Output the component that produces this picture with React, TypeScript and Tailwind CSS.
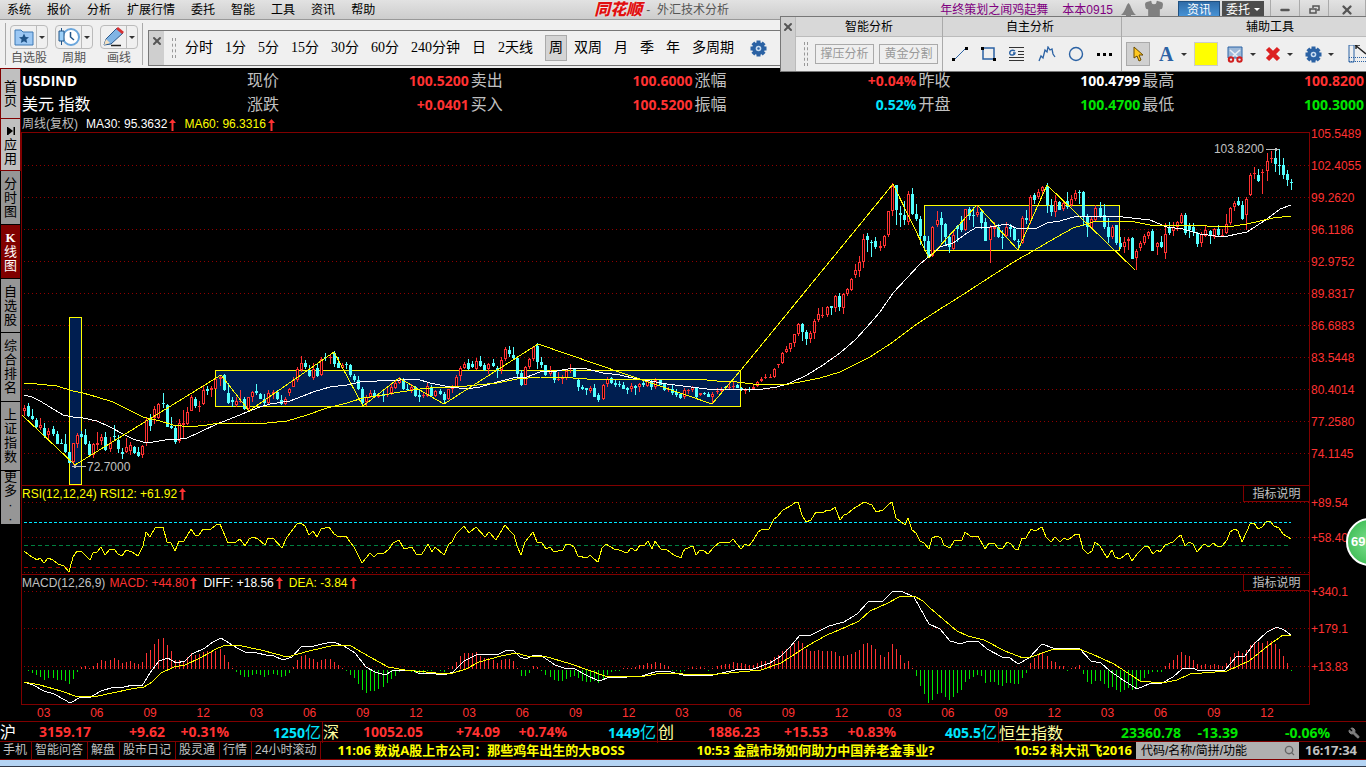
import React from "react";
import { Search, Wrench, Shirt, X, Minus } from "lucide-react";

const menus = ["系统", "报价", "分析", "扩展行情", "委托", "智能", "工具", "资讯", "帮助"];
const periods = ["分时", "1分", "5分", "15分", "30分", "60分", "240分钟", "日", "2天线"];
const longPeriods = ["双周", "月", "季", "年", "多周期"];

const sideTabs = [
  { chars: ["首", "页"], style: "h-[49px] bg-[#c0c0c0] text-black outline outline-1 outline-[#800000]" },
  { chars: ["⏯", "应", "用"], style: "h-[51px] bg-[#c0c0c0] text-black outline outline-1 outline-[#800000]" },
  { chars: ["分", "时", "图"], style: "h-[53px] bg-[#969696] text-black" },
  { chars: ["K", "线", "图"], style: "h-[53px] bg-[#800000] text-white" },
  { chars: ["自", "选", "股"], style: "h-[53px] bg-[#969696] text-black" },
  { chars: ["综", "合", "排", "名"], style: "h-[68px] bg-[#969696] text-black" },
  { chars: ["上", "证", "指", "数"], style: "h-[68px] bg-[#969696] text-black" },
  { chars: ["更", "多", "·", "·"], style: "h-[53px] bg-[#969696] text-black" },
];

const RED = "text-[#ff3232]";
const GREEN = "text-[#00e600]";
const CYAN = "text-[#00e6ff]";

const quotes = [
  [
    ["现价", "100.5200", RED],
    ["卖出", "100.6000", RED],
    ["涨幅", "+0.04%", RED],
    ["昨收", "100.4799", "text-white"],
    ["最高", "100.8200", RED],
  ],
  [
    ["涨跌", "+0.0401", RED],
    ["买入", "100.5200", RED],
    ["振幅", "0.52%", CYAN],
    ["开盘", "100.4700", GREEN],
    ["最低", "100.3000", GREEN],
  ],
];

const priceAxis = ["105.5489", "102.4055", "99.2620", "96.1186", "92.9752", "89.8317", "86.6883", "83.5448", "80.4014", "77.2580", "74.1145"];
const months = ["03", "06", "09", "12", "03", "06", "09", "12", "03", "06", "09", "12", "03", "06", "09", "12", "03", "06", "09", "12", "03", "06", "09", "12"];

// one candle per week: u/d, high, body top, body bottom, low
const candles = `u 405 408 411 416,d 403 406 416 417,d 409 416 419 420,d 418 420 427 429,u 418 425 428 430,d 423 428 436 438,u 428 431 435 439,d 426 429 434 436,d 431 434 444 444,d 439 443 444 444,
d 434 444 452 453,d 452 452 463 463,u 443 443 462 465,u 433 435 444 448,d 431 434 437 438,d 429 435 444 445,d 441 444 455 456,u 443 444 455 458,u 432 443 445 450,u 434 437 441 445,
d 432 437 450 451,u 437 443 449 452,d 425 436 437 441,d 435 440 449 453,d 448 452 454 459,u 438 447 452 453,u 442 445 451 455,d 446 447 453 454,d 447 452 456 457,u 445 446 455 458,
u 418 420 443 446,d 414 419 426 431,u 406 409 418 424,u 403 404 418 419,d 393 403 404 408,d 404 405 427 427,d 417 426 428 429,d 426 428 442 444,u 419 423 441 443,u 410 423 425 439,
u 407 412 424 425,u 395 397 411 411,d 397 399 406 408,u 401 406 407 412,u 385 390 404 405,d 386 389 391 395,u 386 388 390 397,u 378 379 389 389,u 375 377 379 386,d 374 375 390 391,
d 383 393 403 404,d 397 400 402 407,u 397 401 405 407,u 390 401 402 403,d 397 399 409 410,u 397 397 409 411,u 391 392 397 402,d 384 391 393 395,d 393 394 399 399,d 394 399 403 405,
u 390 393 403 404,u 390 392 394 399,d 390 392 399 400,d 395 400 404 405,u 397 399 404 405,u 388 389 393 396,u 377 380 387 387,u 367 369 380 382,u 356 363 370 372,d 360 363 367 369,
d 365 370 376 377,u 363 369 378 380,d 363 368 376 377,u 357 359 375 376,d 353 357 358 361,u 355 357 358 364,d 351 353 364 367,d 357 363 368 368,u 363 365 368 368,d 362 364 365 369,
d 364 365 375 377,d 374 376 380 382,d 376 380 389 390,d 387 389 403 406,u 395 397 402 406,u 390 393 397 398,d 390 393 397 398,u 393 395 397 398,d 389 394 396 402,u 387 394 395 397,
u 384 387 393 395,u 380 383 388 389,u 377 380 383 384,d 378 380 389 390,d 384 389 390 391,u 384 387 390 393,d 386 387 396 397,d 390 395 397 402,u 392 395 396 398,u 383 386 396 397,
d 385 387 396 397,u 390 391 396 397,d 389 391 394 395,d 392 394 400 403,u 389 389 399 400,u 385 387 389 393,u 375 377 387 388,u 366 368 376 381,u 362 364 368 369,d 359 363 369 370,
d 361 364 367 368,u 358 361 369 370,d 356 361 366 367,d 363 365 370 371,u 363 364 369 374,d 359 363 366 367,d 366 368 371 378,u 357 360 370 374,u 347 349 359 361,d 346 350 354 357,
d 347 355 358 359,d 357 358 374 379,d 370 373 385 386,u 366 367 385 385,u 358 359 367 369,u 346 347 359 361,d 343 346 362 369,d 357 362 365 368,d 365 365 375 376,u 366 371 374 376,
d 371 372 380 383,u 372 379 380 381,u 375 378 379 384,u 369 371 378 380,u 364 368 369 373,d 368 369 377 377,d 379 380 387 391,d 385 387 389 390,d 388 388 390 395,u 386 388 391 393,
d 384 388 397 397,d 393 395 400 402,u 384 385 399 400,u 377 379 384 387,d 377 378 383 384,d 380 383 385 387,d 381 384 385 387,d 382 385 389 389,d 387 388 390 394,u 383 386 389 392,
d 385 386 388 395,u 383 384 387 392,d 380 383 385 387,u 379 380 386 387,d 379 381 387 390,u 378 380 387 389,d 379 380 385 385,d 383 384 390 391,u 387 389 390 392,d 385 389 393 395,
d 389 392 395 397,d 393 394 398 399,u 388 390 397 399,u 389 390 391 394,u 386 387 390 392,d 387 387 397 398,u 393 393 395 396,d 392 393 394 395,d 392 394 397 397,u 392 394 397 403,
u 388 391 392 394,u 387 389 391 393,d 386 387 388 389,u 382 387 387 389,u 381 386 387 389,d 384 385 388 388,d 387 388 390 391,u 388 389 391 394,d 387 389 390 392,u 385 387 389 390,
u 381 382 386 387,u 377 379 381 382,u 374 377 378 379,u 374 377 378 378,u 368 369 377 378,u 364 364 365 368,u 352 353 363 364,u 346 349 352 353,u 343 343 349 352,u 334 334 343 347,
u 323 324 334 336,d 323 324 332 341,d 330 332 339 345,u 331 333 339 343,u 319 321 333 339,u 308 314 320 322,u 307 315 316 318,u 306 307 315 317,d 306 306 308 315,u 295 296 308 312,
d 293 296 307 311,u 293 294 308 314,u 288 289 294 296,u 278 279 290 291,u 264 270 275 278,u 256 262 271 277,u 234 239 262 268,d 233 236 240 252,d 240 242 243 257,d 237 241 247 249,
u 241 246 248 251,u 235 236 246 248,u 211 211 235 237,u 183 186 211 216,d 185 185 210 225,d 206 213 215 227,d 201 215 220 225,u 191 194 222 225,d 188 194 214 215,d 204 214 219 221,
d 216 219 236 245,d 235 236 241 250,d 236 241 257 258,u 226 227 256 257,u 211 220 225 227,d 212 218 225 242,d 223 224 237 246,d 234 237 247 253,u 232 235 249 250,d 225 226 229 242,
d 216 222 230 232,u 209 209 230 231,d 207 209 216 220,d 207 215 216 227,u 205 212 215 217,d 210 212 223 229,d 218 222 241 241,u 225 227 240 263,u 222 227 229 237,d 224 227 237 238,
d 230 237 238 249,u 222 227 236 237,d 224 227 229 237,d 228 229 240 241,d 239 241 242 250,u 216 218 243 244,d 210 218 220 224,u 195 197 221 224,d 193 195 200 204,u 189 192 197 199,
u 186 187 191 194,d 183 187 205 213,d 199 205 212 216,u 195 201 212 217,d 201 202 210 210,u 200 203 209 211,d 192 201 207 209,u 195 199 205 207,u 190 193 199 201,d 190 192 193 204,
d 191 192 217 226,d 214 217 227 237,u 216 219 228 229,u 205 208 220 221,d 202 208 216 218,d 204 215 227 229,d 218 227 237 243,u 225 227 237 239,d 225 225 243 245,d 237 243 247 249,
u 237 242 247 253,u 237 239 241 250,d 237 238 259 259,u 249 251 258 270,u 241 243 248 251,u 234 236 243 245,u 231 232 236 239,d 229 231 251 251,u 242 243 247 255,d 236 242 247 248,
u 223 234 253 259,d 222 227 233 235,u 222 227 231 236,u 221 222 227 231,u 213 215 223 224,d 213 215 233 235,d 223 226 230 238,d 223 227 232 236,d 232 233 244 247,u 232 234 243 247,
u 226 230 236 237,d 230 231 236 244,u 228 229 237 239,d 225 229 235 237,u 229 235 236 237,u 214 224 233 234,u 207 208 223 225,u 201 203 207 211,d 197 201 205 206,d 201 205 219 220,
u 197 199 215 230,u 173 175 195 196,u 167 173 174 179,d 169 175 181 182,u 169 172 173 194,u 153 161 171 181,u 151 158 159 163,d 151 158 164 172,d 149 165 166 175,d 158 165 175 179,
d 170 174 180 186,d 179 182 183 190`
  .split(",")
  .map((row) => {
    const [kind, ...ys] = row.trim().split(" ");
    return { up: kind === "u", ys: ys.map(Number) };
  });

const ma30 =
  "24,395 32,397 40,401 50,407 63,415 73,417 83,418 97,421 110,427 123,434 133,439 143,442 153,442 165,440 180,439 187,438 200,432 217,424 230,419 247,412 260,407 270,404 290,401 303,396 313,392 330,387 347,385 360,382 377,381 400,380 417,379 430,383 450,387 467,389 480,387 497,382 513,378 527,377 540,372 557,371 573,368 587,369 603,373 620,375 637,379 650,381 667,384 683,386 707,389 730,389 763,389 777,387 790,383 807,375 823,365 840,353 855,340 867,327 880,312 893,293 907,278 920,264 933,253 940,247 953,243 967,233 977,227 990,227 1007,224 1018,229 1037,228 1047,223 1060,221 1077,216 1100,216 1123,217 1150,220 1167,227 1183,229 1200,234 1223,237 1247,232 1267,219 1280,209 1291,205";
const ma60 =
  "24,383 37,384 57,386 73,391 83,393 97,397 113,402 127,409 143,417 160,421 173,425 190,427 207,425 220,423 247,424 267,423 287,421 307,415 327,408 347,403 363,398 383,395 400,392 420,389 440,387 450,387 467,386 497,383 517,379 540,377 573,378 600,380 617,379 663,379 697,379 717,381 737,382 753,384 783,385 800,382 820,378 840,372 870,357 893,342 917,324 940,309 953,301 967,292 990,277 1017,260 1033,251 1050,241 1073,228 1093,222 1110,221 1130,221 1150,225 1187,225 1227,227 1247,224 1273,218 1291,216";
const zigzag =
  "22,415 75,465 221,375 249,411 334,352 363,406 399,378 444,404 538,344 712,404 741,370 893,184 929,258 977,205 1018,250 1047,185 1135,270";

const rsi =
  "24,551 29,555 37,560 40,558 44,563 48,558 53,560 58,564 64,566 69,572 73,557 77,551 82,552 90,560 93,553 97,552 101,547 105,555 110,549 114,549 118,554 122,556 126,550 132,552 138,556 143,546 146,532 150,537 155,528 158,527 163,527 167,542 171,543 175,551 179,541 184,541 191,529 195,535 199,535 203,529 211,529 216,525 220,524 228,543 236,542 240,539 245,546 249,539 253,537 258,539 265,545 268,538 273,538 282,548 287,537 297,524 301,523 305,526 309,535 313,531 317,537 321,529 329,527 334,534 339,537 346,536 350,542 354,547 362,563 370,553 374,557 378,553 383,554 389,549 393,543 399,540 404,549 412,547 416,554 422,554 428,544 432,552 435,547 444,555 449,544 452,542 456,534 464,526 469,533 476,527 485,537 489,532 496,540 505,525 510,531 514,535 517,546 521,555 525,542 533,532 537,542 542,543 546,549 550,547 554,552 563,550 566,544 570,544 574,547 578,556 587,558 590,555 594,559 598,562 602,548 606,544 614,549 619,550 627,553 631,548 636,551 640,545 644,546 648,541 652,549 655,541 661,549 667,550 674,555 681,558 683,552 685,549 693,546 696,555 700,550 704,551 708,554 714,547 720,542 730,542 733,539 741,549 745,544 749,546 754,539 758,532 763,529 769,529 774,519 777,517 783,510 792,505 796,502 798,502 802,515 806,522 811,520 816,512 824,512 827,510 830,511 835,507 840,520 844,515 847,514 853,509 858,506 864,502 872,505 876,512 883,510 888,505 892,502 896,518 905,525 908,518 912,530 916,533 920,541 924,543 929,549 932,538 937,536 941,538 944,545 950,548 954,541 962,540 965,532 970,536 978,536 985,549 989,543 994,543 998,548 1003,548 1007,542 1011,544 1015,549 1018,550 1022,538 1026,538 1031,529 1035,531 1042,527 1046,537 1051,542 1055,537 1060,542 1064,538 1068,540 1076,534 1079,534 1083,549 1088,554 1092,551 1095,542 1100,546 1107,558 1112,550 1115,557 1120,559 1128,553 1132,561 1138,553 1145,546 1148,546 1153,554 1157,550 1160,552 1165,545 1173,542 1177,538 1181,535 1185,546 1189,542 1193,544 1197,552 1204,544 1209,547 1213,543 1217,546 1222,546 1227,540 1230,532 1235,529 1238,531 1242,542 1247,531 1250,524 1254,523 1258,529 1262,527 1266,522 1270,521 1274,526 1279,528 1283,534 1291,539";

const diff =
  "24,682 33,685 44,691 54,694 65,700 70,703 81,697 91,697 101,691 114,687 124,687 133,685 142,686 150,673 159,661 168,658 176,663 185,661 192,654 205,648 213,642 221,638 229,643 237,648 245,652 257,653 266,655 274,656 283,660 292,657 301,647 314,646 322,644 333,642 344,646 355,653 366,667 375,672 385,675 394,670 412,670 418,673 427,673 444,675 453,672 464,661 478,654 497,655 507,650 514,651 520,657 526,659 534,655 542,656 555,665 564,668 575,669 586,675 599,681 610,677 627,677 642,676 658,671 671,672 683,675 713,675 735,670 753,669 770,663 781,656 790,647 800,635 811,635 829,626 844,622 857,614 868,602 883,601 892,592 901,591 914,597 920,608 929,624 940,629 950,641 961,644 968,641 979,642 987,649 1002,657 1010,658 1018,664 1029,658 1042,644 1053,648 1071,649 1079,648 1091,661 1101,663 1110,671 1123,680 1137,689 1149,684 1162,683 1173,677 1182,669 1193,668 1199,671 1212,670 1225,670 1236,657 1245,656 1254,644 1267,632 1277,627 1284,630 1291,635";
const dea =
  "24,682 40,685 61,691 78,697 98,696 131,689 144,687 152,682 161,673 174,667 185,665 200,658 218,648 226,645 237,645 261,650 287,657 309,651 335,645 351,646 370,657 388,667 405,670 436,673 453,673 466,669 479,662 501,656 516,653 527,656 544,656 571,664 605,676 645,676 662,673 683,674 718,674 761,670 781,663 809,645 827,635 846,627 859,621 870,611 888,603 899,597 914,596 923,601 929,607 944,620 957,631 968,636 984,640 1005,651 1023,658 1031,657 1051,650 1079,649 1092,654 1114,664 1140,681 1162,683 1177,680 1190,674 1227,671 1249,661 1269,645 1283,635 1291,635";

const bars = [
  0, -1, -3, -5, -7, -10, -8, -8, -10, -10, -11, -14, -9, -2, 2, 3, 1, 3, 6, 9, 8, 9, 11, 9, 6, 7, 8, 6, 5, 7, 16, 19, 25, 30, 31, 24, 18, 9, 9, 8,
  12, 16, 14, 15, 17, 18, 18, 18, 20, 14, 7, 1, -2, -5, -7, -7, -5, -4, -5, -7, -5, -4, -5, -7, -6, -3, 2, 9, 13, 14, 11, 10, 7, 9, 10, 10, 7, 4, 1, -1,
  -5, -8, -14, -20, -23, -21, -21, -19, -17, -13, -9, -6, -2, -1, -1, -2, -3, -4, -3, -1, -1, 0, -1, -2, 1, 3, 7, 13, 16, 16, 16, 17, 13, 11, 11, 9, 6, 9, 10, 10,
  8, 1, -6, -6, -3, 3, 2, -1, -5, -7, -10, -11, -11, -9, -7, -6, -8, -11, -12, -12, -11, -13, -9, -5, -2, -1, -1, 1, 1, 1, 2, 4, 4, 6, 5, 7, 6, 4, 3, -1,
  -1, -2, -1, 1, 2, 1, 2, 1, -1, 1, 3, 4, 5, 5, 7, 6, 6, 5, 4, 4, 6, 8, 8, 9, 12, 14, 18, 20, 23, 26, 28, 26, 20, 18, 18, 19, 18, 18, 18, 17,
  13, 13, 14, 15, 17, 19, 25, 26, 24, 20, 14, 12, 17, 25, 20, 14, 6, 8, 1, -6, -16, -24, -33, -30, -24, -23, -27, -30, -27, -23, -20, -12, -9, -7, -5, -6, -13, -12, -12, -15,
  -16, -13, -13, -14, -14, -8, -3, 6, 11, 14, 17, 13, 8, 7, 3, 3, -1, 1, 2, 4, -4, -12, -14, -11, -11, -14, -18, -17, -20, -22, -20, -18, -20, -18, -12, -8, -4, -2, -2, -2,
  3, 6, 9, 14, 17, 14, 13, 9, 5, 4, 5, 4, 5, 4, 3, 6, 12, 16, 18, 16, 19, 24, 27, 27, 26, 28, 28, 25, 20, 13, 6, -1,
];

const slotX = (i: number) => Math.round(24 + (i * 1267) / 311);

const indices = [
  { name: "沪", values: ["3159.17", "+9.62", "+0.31%", "1250亿"], color: RED, cols: "grid-cols-[16px_75px_74px_64px_1fr]" },
  { name: "深", values: ["10052.05", "+74.09", "+0.74%", "1449亿"], color: RED, cols: "grid-cols-[16px_84px_77px_67px_1fr]" },
  { name: "创", values: ["1886.23", "+15.53", "+0.83%", "405.5亿"], color: RED, cols: "grid-cols-[16px_86px_68px_68px_1fr]" },
];

const shortcuts = ["手机", "智能问答", "解盘", "股市日记", "股灵通", "行情", "24小时滚动"];

const Caret = () => <span className="border-x-[3px] border-t-[3px] border-x-transparent border-t-[#333]" />;

const UpArrow = () => (
  <svg className="mx-[2px] h-3 w-[7px]" viewBox="0 0 7 12">
    <path d="M3.5 0 L7 4 H4.5 V12 H2.5 V4 H0 Z" fill="#ff3232" />
  </svg>
);

const Gear = () => (
  <svg className="h-[17px] w-[17px]" viewBox="-8.5 -8.5 17 17">
    {[0, 45, 90, 135].map((angle) => (
      <rect key={angle} x="-2" y="-8" width="4" height="16" fill="#2b62a4" transform={`rotate(${angle})`} />
    ))}
    <circle r="6.3" fill="#2b62a4" />
    <circle r="2.8" fill="#c8dcf0" />
    <circle r="1.2" fill="#2b62a4" />
  </svg>
);

const Pane = ({ top, height, children }: { top: number; height: number; children: React.ReactNode }) => (
  <svg className="block h-full w-full" viewBox={`22 ${top} 1287 ${height}`} preserveAspectRatio="none" shapeRendering="crispEdges" fill="none">
    {children}
  </svg>
);

const Dotted = ({ y }: { y: number }) => <line x1="24" x2="1309" y1={y + 0.5} y2={y + 0.5} stroke="#900000" strokeDasharray="1 3" />;

const TitleBar = () => (
  <header className="flex h-5 shrink-0 items-center overflow-hidden border-b border-[#999] bg-linear-to-b from-[#e2e2e2] to-[#cdcdcd] text-xs text-black">
    <nav className="flex w-[43.5%] shrink-0 gap-4 pl-[7px]">
      {menus.map((item) => (
        <button key={item}>{item}</button>
      ))}
    </nav>
    <h1 className="flex shrink-0 items-center text-[#555]">
      <span className="mr-1 text-base font-black italic leading-5 text-[#e01010] [text-shadow:0_0_2px_white]">同花顺</span>
      <span>- &nbsp;外汇技术分析</span>
    </h1>
    <div className="flex h-full flex-1 items-center justify-end">
      <a href="#news" className="mr-[14px] text-[#800080]">年终策划之闻鸡起舞</a>
      <a href="#user" className="mr-2 text-[#800080]">本本0915</a>
      <svg className="mr-2 h-[14px] w-[15px]" viewBox="0 0 15 14">
        <path d="M7.5 0 C10 2 11 9 15 12 H0 C4 9 5 2 7.5 0Z M5 12 h5 v2 h-5z" fill="#808080" />
      </svg>
      <Shirt className="mr-[14px] h-5 w-5 fill-[#808080] text-[#808080]" />
      <button className="mr-[2px] h-[18px] w-[42px] border border-[#205080] bg-linear-to-b from-[#2f6ca8] to-[#4a98dc] leading-4 text-white">资讯</button>
      <button className="mr-[6px] flex h-[18px] w-[42px] items-center justify-center gap-1 bg-[#4c4c4c] leading-4 text-white">
        委托
        <span className="border-x-[3px] border-t-[3px] border-x-transparent border-t-white" />
      </button>
      <button aria-label="最小化" className="flex h-full w-[29px] items-center justify-center border-l border-[#aaa] text-[#555]">
        <Minus className="h-3 w-3" strokeWidth={5} />
      </button>
      <button aria-label="还原" className="flex h-full w-[29px] items-center justify-center border-l border-[#aaa]">
        <svg className="h-[9px] w-[11px]" viewBox="0 0 11 9" fill="none" stroke="#555" strokeWidth="1.5">
          <path d="M4 3 V1 H10 V5 H8 M1 4 H7 V8 H1 Z" />
        </svg>
      </button>
      <button aria-label="关闭" className="flex h-full w-[38px] items-center justify-center border-x border-[#aaa] text-[#555]">
        <X className="h-[14px] w-[14px]" strokeWidth={4} />
      </button>
    </div>
  </header>
);

const BigTool = ({ label, children }: { label: string; children: React.ReactNode }) => (
  <div className="flex flex-col items-center gap-[2px] pt-[2px]">
    <button aria-label={label} className="flex h-[25px] w-[38px] rounded-sm border border-[#bbb]">
      <span className="flex h-full w-[26px] items-center justify-center border-r border-[#bbb]">{children}</span>
      <span className="flex h-full flex-1 items-center justify-center">
        <Caret />
      </span>
    </button>
    <span className="text-xs leading-[14px] text-[#555]">{label}</span>
  </div>
);

const DrawingPanel = () => (
  <aside className="absolute left-[780px] right-0 top-4 z-10 flex h-14 overflow-hidden border border-r-0 border-[#777] bg-[#efefef] text-xs text-black">
    <button aria-label="关闭工具栏" className="flex w-[15px] shrink-0 justify-center border-r border-[#bbb] bg-[#cfcfcf] pt-1 text-[#555]">
      <X className="h-3 w-3" strokeWidth={4} />
    </button>
    <section className="w-[147px] shrink-0 border-r border-[#aaa]">
      <h2 className="h-5 border-b border-[#bbb] bg-[#d8d8d8] text-center leading-5">智能分析</h2>
      <div className="flex h-[34px] items-center gap-[5px] pl-2">
        <span className="mr-[2px] h-6 w-1 border-x border-dashed border-[#999]" />
        <button className="h-5 w-[59px] border border-[#aaa] text-[#999]">撑压分析</button>
        <button className="h-5 w-[59px] border border-[#aaa] text-[#999]">黄金分割</button>
      </div>
    </section>
    <section className="w-[179px] shrink-0 border-r border-[#aaa]">
      <h2 className="h-5 border-b border-[#bbb] bg-[#d8d8d8] pr-1 text-center leading-5">自主分析</h2>
      <div className="flex h-[34px] items-center justify-between px-[9px]">
        <button aria-label="线段">
          <svg className="h-4 w-4" viewBox="0 0 16 16">
            <path d="M2 14 L14 2" stroke="#2b62a4" />
            <path d="M0 12h3v3h-3z M13 1h3v3h-3z" />
          </svg>
        </button>
        <button aria-label="矩形">
          <svg className="h-4 w-4" viewBox="0 0 16 16">
            <path d="M2 2 H13 V13 H2 Z" fill="none" stroke="#2b62a4" strokeWidth="1.5" />
            <path d="M0 1h3v3h-3z M12 12h3v3h-3z" />
          </svg>
        </button>
        <button aria-label="黄金线">
          <svg className="h-4 w-4" viewBox="0 0 16 16" fill="none">
            <path d="M0 1.5h15 M9 5.5h6 M9 8.5h6 M0 11.5h15 M0 14.5h15" stroke="#333" />
            <path d="M6 5 C3 3 0 5 1 8 C2 10 6 9 6 7 H4" stroke="#2b62a4" strokeWidth="1.5" />
          </svg>
        </button>
        <button aria-label="波浪">
          <svg className="h-4 w-[18px]" viewBox="0 0 18 16" fill="none" stroke="#2b62a4" strokeWidth="1.3">
            <path d="M1 15 L3 10 L5 12 L7 4 L9 6 L10 1 L12 4 L14 3 L15 8 L17 11" />
          </svg>
        </button>
        <button aria-label="圆形">
          <svg className="h-4 w-4" viewBox="0 0 16 16" fill="none" stroke="#2b62a4" strokeWidth="1.4">
            <circle cx="8" cy="8" r="6.5" />
          </svg>
        </button>
        <button aria-label="更多" className="flex gap-[3px]">
          <i className="h-[3px] w-[3px] bg-black" />
          <i className="h-[3px] w-[3px] bg-black" />
          <i className="h-[3px] w-[3px] bg-black" />
        </button>
      </div>
    </section>
    <section className="w-[296px] shrink-0">
      <h2 className="h-5 border-b border-[#bbb] bg-[#d8d8d8] text-center leading-5">辅助工具</h2>
      <div className="flex h-[34px] items-center pl-1">
        <button aria-label="选择" className="flex h-6 w-6 items-center justify-center border border-[#aaa] bg-[#d0d0d0]">
          <svg className="h-4 w-[11px]" viewBox="0 0 11 16">
            <path d="M1 1 V12 L4 10 L6 15 L8 14 L6 9 H10 Z" fill="#ffc820" stroke="#6a4a00" />
          </svg>
        </button>
        <button aria-label="文字" className="ml-[9px] flex items-center gap-2 font-['Liberation_Serif',serif] text-xl font-bold text-[#2b62a4]">
          A<Caret />
        </button>
        <button aria-label="颜色" className="ml-[7px] h-6 w-6 border border-[#ccc] bg-[#ffff00]" />
        <button aria-label="剪切" className="ml-[9px] flex items-center gap-[6px]">
          <svg className="h-[17px] w-[17px]" viewBox="0 0 17 17" fill="none">
            <path d="M1 1 H15 V12 H1 Z" fill="#9cb8d8" stroke="#2b62a4" />
            <path d="M3 4 L12 12 M13 4 L4 12" stroke="#e8eef4" strokeWidth="1.6" />
            <circle cx="4" cy="13.500" r="2.2" stroke="#d02020" strokeWidth="2" />
            <circle cx="12.500" cy="13.500" r="2.2" stroke="#d02020" strokeWidth="2" />
          </svg>
          <Caret />
        </button>
        <button aria-label="删除" className="ml-[9px] flex items-center gap-[6px]">
          <svg className="h-4 w-4" viewBox="0 0 16 16">
            <path d="M2.500 2.500 L13.500 13.500 M13.500 2.500 L2.500 13.500" stroke="#dc2020" strokeWidth="4.500" />
          </svg>
          <Caret />
        </button>
        <button aria-label="设置" className="ml-3 flex items-center gap-[6px]">
          <Gear />
          <Caret />
        </button>
        <button aria-label="量度" className="ml-[14px]">
          <svg className="h-[18px] w-5" viewBox="0 0 20 18" fill="none">
            <path d="M1 0 H6 V17 H1 Z" stroke="#2b62a4" />
            <path d="M7 0 L18 9 M8 0 h4 M8 0 v4" stroke="#222" strokeWidth="1.4" />
            <path d="M1 12.5 H20 M1 16.5 H20" stroke="#2b62a4" strokeDasharray="1 1" />
          </svg>
        </button>
      </div>
    </section>
  </aside>
);

const Toolbar = () => (
  <div className="flex h-12 shrink-0 bg-[#f0f0f0] text-black">
    <div className="my-[3px] ml-[5px] flex gap-[7px] border-l border-r border-[#aaa] pl-1 pr-1">
      <BigTool label="自选股">
        <svg className="h-[18px] w-5" viewBox="0 0 20 18">
          <path d="M1 2 H7 L9 4 H19 V17 H1 Z" fill="#9cc8f4" stroke="#3c78b4" />
          <path d="M10 5.5 L11.6 9 L15 9.3 L12.4 11.6 L13.2 15 L10 13.2 L6.8 15 L7.6 11.6 L5 9.3 L8.4 9 Z" fill="#205488" />
        </svg>
      </BigTool>
      <BigTool label="周期">
        <svg className="h-5 w-[22px]" viewBox="0 0 22 20" fill="none">
          <circle cx="13" cy="10" r="8" fill="#fff" stroke="#6aa6dc" strokeWidth="2" />
          <path d="M12.500 5 V10 L16 13" stroke="#205488" strokeWidth="1.5" />
          <path d="M3.500 1 V4 M3.500 14 V18 M1 4 H6 V14 H1 Z" fill="#9cd0f8" stroke="#205488" />
        </svg>
      </BigTool>
      <BigTool label="画线">
        <svg className="h-5 w-[22px]" viewBox="0 0 22 20">
          <path d="M8 18.500 H18" stroke="#222" strokeWidth="1.500" />
          <path d="M1 18 L3 12 L14 1 L20 6 L8 17 Z" fill="#80b4e4" stroke="#28588c" />
          <path d="M13 2 L15 0 L21 5 L19 7 Z" fill="#d83030" />
          <path d="M1 18 L3 12 L7 16 Z" fill="#f4e0c0" />
        </svg>
      </BigTool>
    </div>
    <div className="mb-[2px] ml-[5px] mt-[10px] flex w-[634px] border border-[#777] font-['Liberation_Serif','Noto_Sans_CJK_SC',serif] text-sm">
      <button aria-label="关闭" className="flex w-[15px] shrink-0 justify-center bg-[#cfcfcf] pt-1 text-[#555]">
        <X className="h-3 w-3" strokeWidth={4} />
      </button>
      <div className="flex items-center pl-2">
        <span className="mr-[9px] h-5 w-1 border-x border-dashed border-[#999]" />
        <div className="flex items-center gap-3">
          {periods.map((p) => (
            <button key={p}>{p}</button>
          ))}
          <button className="h-[26px] w-[22px] border border-[#aaa] bg-[#d4d4d4]">周</button>
        </div>
        <div className="ml-[7px] mr-4 flex items-center gap-3">
          {longPeriods.map((p) => (
            <button key={p}>{p}</button>
          ))}
        </div>
        <button aria-label="设置">
          <Gear />
        </button>
      </div>
    </div>
  </div>
);

const SideBar = () => (
  <nav className="flex w-[21px] shrink-0 flex-col gap-px pl-px pt-px">
    {sideTabs.map((tab) => (
      <button key={tab.chars.join("")} className={`flex w-[19px] shrink-0 flex-col items-center justify-center text-[13px] leading-[14px] ${tab.style}`}>
        {tab.chars.map((c, i) =>
          c === "⏯" ? (
            <svg key={i} className="my-[3px] h-2 w-2" viewBox="0 0 8 8">
              <path d="M0 0h1.500v8H0z M1 0 L6 4 L1 8z M6.500 0H8v8H6.500z" />
            </svg>
          ) : (
            <span key={i} className={c === "K" ? "font-['Liberation_Serif',serif] font-bold" : ""}>{c}</span>
          )
        )}
      </button>
    ))}
  </nav>
);

const QuoteHeader = () => (
  <section className="h-12 shrink-0 pl-px text-base leading-6 text-[#c0c0c0]">
    {quotes.map((row, r) => (
      <div key={r} className="grid h-6 grid-cols-[225px_repeat(5,minmax(0,1fr))]">
        {r === 0 ? (
          <strong className="font-['Open_Sans',sans-serif] text-sm leading-6 text-white">USDIND</strong>
        ) : (
          <span className="text-white">美元 指数</span>
        )}
        {row.map(([label, value, color]) => (
          <div key={label} className="flex items-center justify-between pr-[2px]">
            <span>{label}</span>
            <b className={`font-['Open_Sans',sans-serif] text-sm ${color}`}>{value}</b>
          </div>
        ))}
      </div>
    ))}
  </section>
);

const Legend = ({ children }: { children: React.ReactNode }) => (
  <div className="absolute left-0 top-0 flex items-center text-xs leading-4">{children}</div>
);

const HelpButton = () => (
  <button className="absolute right-0 top-0 h-4 w-[66px] border-b border-l border-[#800000] text-xs leading-[14px] text-[#c0c0c0]">指标说明</button>
);

const Charts = () => (
  <section className="grid grid-cols-[1fr_56px] text-xs text-[#ff3232]">
    <div className="relative h-[353px] border border-b-0 border-[#800000]">
      <Pane top={133} height={352}>
        {Array.from({ length: 10 }, (_, i) => (
          <Dotted key={i} y={165 + i * 32} />
        ))}
        <g fill="#001e50" stroke="#ffff00">
          <rect x="69.500" y="317.500" width="12" height="167" />
          <rect x="215.500" y="370.500" width="525" height="36" />
          <rect x="924.500" y="205.500" width="195" height="45" />
        </g>
        {candles.map(({ up, ys: [high, top, bottom, low] }, i) => {
          const x = slotX(i);
          const tall = Math.max(1, bottom - top);
          return (
            <g key={i}>
              <path d={`M${x + 0.5} ${high} V${low}`} stroke={up ? "#ff3232" : "#54ffff"} />
              <rect x={x - 1} y={top} width={3} height={tall} fill={up ? "#ff3232" : "#54ffff"} />
              {up && tall > 2 && <rect x={x} y={top + 1} width={1} height={tall - 2} fill="#000" />}
            </g>
          );
        })}
        <polyline points={ma30} stroke="#fff" />
        <polyline points={ma60} stroke="#ffff00" />
        <polyline points={zigzag} stroke="#ffff00" />
        <path d="M75 466.500 H86 M1266 149.500 H1277" stroke="#c0c0c0" />
        <path d="M72 466.500 l4 -2 v4z M1279 149.500 l-4 -2 v4z" fill="#c0c0c0" />
      </Pane>
      <span className="absolute bottom-[10px] left-[65px] leading-4 text-[#c0c0c0]">72.7000</span>
      <span className="absolute right-[45px] top-2 leading-4 text-[#c0c0c0]">103.8200</span>
    </div>
    <ol className="-mt-[6px] pl-px">
      {priceAxis.map((p) => (
        <li key={p} className="h-8 leading-4">{p}</li>
      ))}
    </ol>

    <div className="relative h-[89px] border border-b-0 border-[#800000]">
      <Pane top={486} height={88}>
        <Dotted y={502} />
        <Dotted y={537} />
        <Dotted y={572} />
        <line x1="24" x2="1291" y1="522.500" y2="522.500" stroke="#00e6ff" strokeDasharray="3 2" />
        <line x1="24" x2="1291" y1="545.500" y2="545.500" stroke="#008040" strokeDasharray="4 3" />
        <line x1="24" x2="1291" y1="567.500" y2="567.500" stroke="#a00000" strokeDasharray="4 4" />
        <polyline points={rsi} stroke="#ffff00" />
      </Pane>
      <Legend>
        <span className="text-[#ffff00]">RSI(12,12,24) RSI12: +61.92</span>
        <UpArrow />
      </Legend>
      <HelpButton />
    </div>
    <ol className="pl-px pt-[10px]">
      <li className="h-[35px] leading-4">+89.54</li>
      <li className="leading-4">+58.40</li>
    </ol>

    <div className="relative h-[131px] border border-[#800000]">
      <Pane top={575} height={129}>
        <Dotted y={591} />
        <Dotted y={628} />
        <Dotted y={666} />
        {bars.map((v, i) => {
          const x = slotX(i) + 0.5;
          return <path key={i} d={v < 0 ? `M${x} 670 v${-v}` : `M${x} 669 v${-v}`} stroke={v < 0 ? "#00e600" : "#ff3232"} />;
        })}
        <polyline points={diff} stroke="#fff" />
        <polyline points={dea} stroke="#ffff00" />
      </Pane>
      <Legend>
        <span className="text-[#c0c0c0]">MACD(12,26,9)</span>
        <span className="ml-1">MACD: +44.80</span>
        <UpArrow />
        <span className="ml-1 text-white">DIFF: +18.56</span>
        <UpArrow />
        <span className="ml-1 text-[#ffff00]">DEA: -3.84</span>
        <UpArrow />
      </Legend>
      <HelpButton />
    </div>
    <ol className="pl-px pt-[10px]">
      <li className="h-[37px] leading-4">+340.1</li>
      <li className="h-[38px] leading-4">+179.1</li>
      <li className="leading-4">+13.83</li>
    </ol>

    <ol className="flex h-4 justify-between pl-4 pr-9">
      {months.map((m, i) => (
        <li key={i} className="leading-4">{m}</li>
      ))}
    </ol>
  </section>
);

const StatusBar = () => (
  <footer className="shrink-0">
    <div className="grid h-5 grid-cols-[323px_335px_341px_1fr] border-t border-[#800000] font-['Open_Sans','Noto_Sans_CJK_SC',sans-serif] text-sm font-bold leading-5">
      {indices.map(({ name, values, color, cols }) => (
        <div key={name} className={`grid border-r border-[#800000] pr-px text-right ${cols}`}>
          <span className={`text-base font-normal leading-5 ${name === "沪" ? "text-white" : "text-[#ffffa0]"}`}>{name}</span>
          {values.map((v) =>
            v.endsWith("亿") ? (
              <span key={v} className={CYAN}>
                {v.slice(0, -1)}
                <span className="text-base font-normal leading-5">亿</span>
              </span>
            ) : (
              <span key={v} className={color}>{v}</span>
            )
          )}
        </div>
      ))}
      <div className={`grid grid-cols-[64px_118px_57px_1fr_36px] items-center text-right ${GREEN}`}>
        <span className="text-left text-base font-normal leading-5 text-[#ffffa0]">恒生指数</span>
        <span>23360.78</span>
        <span>-13.39</span>
        <span>-0.06%</span>
        <Wrench className="ml-[18px] h-3 w-3 -scale-x-100 fill-[#808080] text-[#808080]" />
      </div>
    </div>
    <div className="flex h-[19px] border-y border-[#800000] text-xs leading-[17px] text-[#c0c0c0]">
      {shortcuts.map((s) => (
        <button key={s} className="shrink-0 border-r border-[#800000] pl-[3px] pr-1">{s}</button>
      ))}
      <div className="flex min-w-0 flex-1 overflow-hidden whitespace-nowrap pl-4 font-['Open_Sans','Noto_Sans_CJK_SC',sans-serif] text-[13px] font-bold text-[#ffff00]">
        <a href="#n1" className="w-[359px] shrink-0">11:06 数说A股上市公司：那些鸡年出生的大BOSS</a>
        <a href="#n2" className="w-[317px] shrink-0">10:53 金融市场如何助力中国养老金事业?</a>
        <a href="#n3">10:52 科大讯飞2016</a>
      </div>
      <label className="flex w-[163px] shrink-0 items-center bg-[#b0b0b0] pl-[5px] pr-1">
        <input aria-label="搜索" placeholder="代码/名称/简拼/功能" className="min-w-0 flex-1 bg-transparent text-xs leading-4 outline-none placeholder:text-black" />
        <Search className="h-[11px] w-[11px] text-[#666]" strokeWidth={3} />
      </label>
      <time className="w-[67px] shrink-0 pl-[6px] font-['Open_Sans',sans-serif] text-[13px] font-bold">16:17:34</time>
    </div>
    <div className="h-[7px] border-b border-[#303848] bg-[#b4d4f4]" />
  </footer>
);

const App = () => {
  return (
    <div className="relative flex min-h-screen flex-col overflow-hidden bg-black font-['Liberation_Sans','Noto_Sans_CJK_SC',sans-serif]">
      <TitleBar />
      <Toolbar />
      <DrawingPanel />
      <main className="flex flex-1">
        <SideBar />
        <div className="min-w-0 flex-1 pt-px">
          <QuoteHeader />
          <div className="flex h-[15px] items-center pl-px text-xs leading-[15px]">
            <span className="mr-2 text-[#c0c0c0]">周线(复权)</span>
            <span className="text-white">MA30: 95.3632</span>
            <UpArrow />
            <span className="ml-[6px] text-[#ffff00]">MA60: 96.3316</span>
            <UpArrow />
          </div>
          <Charts />
        </div>
      </main>
      <StatusBar />
      <div className="absolute -right-7 top-[518px] flex h-12 w-12 items-center rounded-full border-2 border-white bg-radial from-[#7ce08c] to-[#28b448] pl-[3px] text-[13px] font-bold text-white">
        69
      </div>
    </div>
  );
};

export default App;
